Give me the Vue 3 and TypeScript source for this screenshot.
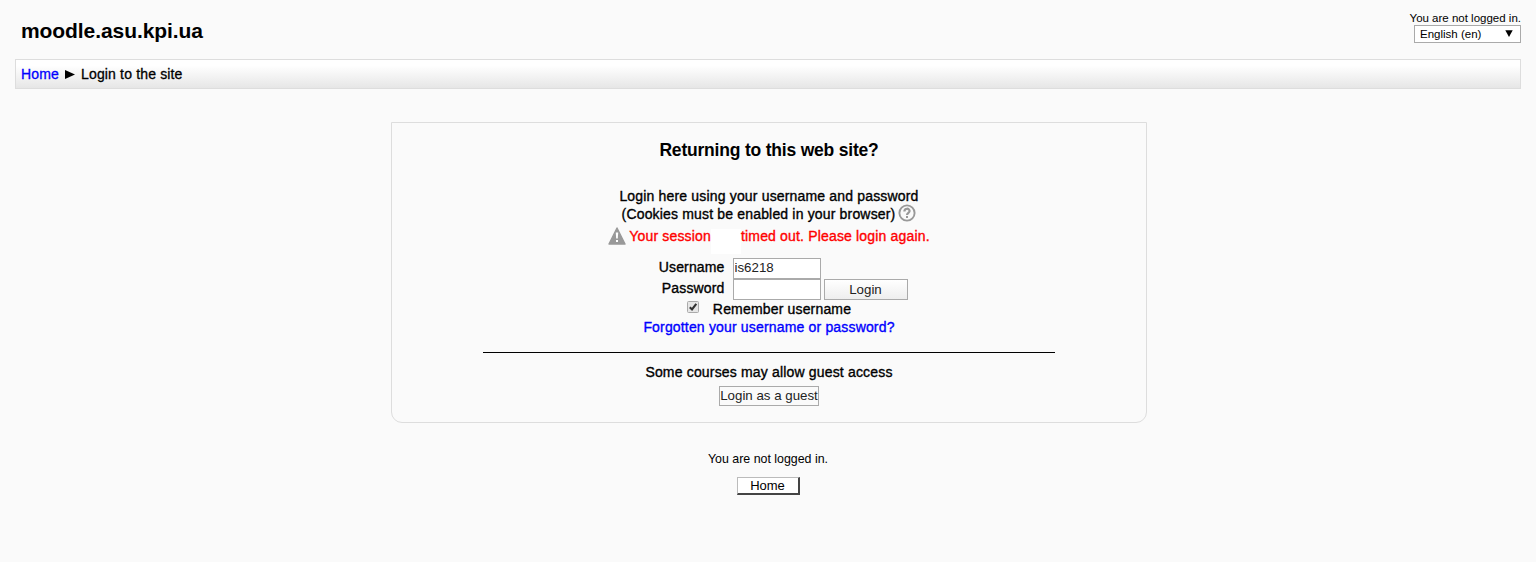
<script setup lang="ts">
import { ref } from 'vue'

const username = ref('is6218')
const password = ref('')
const remember = ref(true)
</script>

<template>
  <div class="page">
    <header class="header">
      <h1 class="site">moodle.asu.kpi.ua</h1>
      <div class="account">
        <div class="status">You are not logged in.</div>
        <div class="language"><span>English (en)</span><svg width="8" height="7" viewBox="0 0 8 7"><path d="M0.3 0.3H7.7L4 7z" /></svg></div>
      </div>
    </header>
    <nav class="crumbs">
      <a class="link">Home</a>
      <svg width="10" height="9" viewBox="0 0 10 9"><path d="M0 0L10 4.5L0 9z" /></svg>
      <span class="here">Login to the site</span>
    </nav>
    <main class="box">
      <h2 class="title">Returning to this web site?</h2>
      <div class="line intro"><span>Login here using your username and password</span></div>
      <div class="line cookies">
        <span>(Cookies must be enabled in your browser)</span>
        <svg class="help" width="18" height="18" viewBox="0 0 18 18">
          <circle cx="9" cy="9" r="7.6" fill="none" stroke="#999" stroke-width="1.9" />
          <path d="M6.4 7.4C6.4 3.9 11.6 3.9 11.6 7C11.6 8.8 9 8.8 9 10.9" fill="none" stroke="#999" stroke-width="2.2" />
          <rect x="8" y="12" width="2" height="2" fill="#999" />
        </svg>
      </div>
      <div class="line error">
        <svg width="18" height="18" viewBox="0 0 18 18">
          <path d="M9 1L17 17H1z" fill="#999" stroke="#999" stroke-width="1.4" stroke-linejoin="round" />
          <path d="M7.8 5.5H10.2L9.8 11.5H8.2z" fill="#fff" />
          <rect x="8" y="13" width="2" height="2" fill="#fff" />
        </svg>
        <span class="first">Your session</span><i class="blank"></i><span class="second">timed out. Please login again.</span>
      </div>
      <form class="form" @submit.prevent>
        <label class="label user" for="username">Username</label>
        <input id="username" v-model="username" class="field" type="text" />
        <label class="label pass" for="password">Password</label>
        <input id="password" v-model="password" class="field" type="password" />
        <button class="login" type="submit">Login</button>
      </form>
      <label class="line remember">
        <input v-model="remember" class="native" type="checkbox" />
        <svg width="12" height="12" viewBox="0 0 12 12">
          <rect x=".5" y=".5" width="11" height="11" rx="1" fill="#e6e6e6" stroke="#aaa" />
          <path v-if="remember" d="M2.8 6.2L5 8.4L9.3 2.8" fill="none" stroke="#333" stroke-width="2.1" />
        </svg>
        <span>Remember username</span>
      </label>
      <div class="line forgot"><a class="link">Forgotten your username or password?</a></div>
      <div class="rule"></div>
      <div class="line guest-text"><span>Some courses may allow guest access</span></div>
      <button class="guest" type="button">Login as a guest</button>
    </main>
    <footer class="footer">
      <div class="foot-status">You are not logged in.</div>
      <a class="home">Home</a>
    </footer>
  </div>
</template>

<style>
body { background: #fafafa; }
</style>

<style scoped>
* { box-sizing: border-box; }
.page { height: 562px; padding: 0 15px; overflow: hidden; background: #fafafa; color: #000; font-family: "Liberation Sans", Arial, sans-serif; font-size: 14px; white-space: nowrap; }
.header { height: 59px; display: flex; justify-content: space-between; }
.site { margin: 18px 0 0 6px; font-size: 21px; line-height: 25px; font-weight: 700; letter-spacing: -.08px; }
.account { display: flex; flex-direction: column; align-items: flex-end; padding-top: 12px; }
.status { font-size: 11.5px; line-height: 13px; }
.language { width: 107px; height: 18px; padding: 0 7px 1px 5px; border: 1px solid #aaa; background: #fff; display: flex; align-items: center; justify-content: space-between; font-size: 11.5px; }
.crumbs { height: 30px; padding: 0 5px; border: 1px solid #ddd; background: linear-gradient(#fff 20%, #e6e6e6); display: flex; align-items: center; font-size: 14px; letter-spacing: .16px; -webkit-text-stroke: .3px; }
.crumbs svg { margin: 1px 6px 0 6px; }
.link { color: #00f; }
.box { width: 756px; height: 301px; margin: 33px 0 0 376px; border: 1px solid #ddd; border-radius: 0 0 11px 11px; display: flex; flex-direction: column; align-items: center; }
.title { margin: 17px 0 0; font-size: 17.5px; line-height: 20px; font-weight: 700; letter-spacing: -.2px; }
.line { display: flex; align-items: center; height: 18px; font-size: 14px; line-height: 18px; letter-spacing: .17px; -webkit-text-stroke: .35px; }
.intro { margin-top: 27px; }
.cookies { height: 17px; }
.help { margin: -1px 0 0 3px; }
.error { height: 26px; color: #f00; margin-top: 1px; }
.error svg { margin: 0 3px 1px 0; }
.blank { width: 30px; height: 25px; margin-top: 10px; background: #fff; }
.form { display: grid; grid-template-columns: 74px 87px 84px; column-gap: 4px; align-items: center; height: 42px; margin: 9px 0 0 24px; grid-template-rows: 21px 21px; }
.label { font-size: 14px; text-align: right; padding-right: 4px; line-height: 18px; letter-spacing: .15px; -webkit-text-stroke: .35px; margin-top: -4px; }
.field { width: 88px; height: 21px; padding: 0 1px 2px; border: 1px solid #aaa; border-radius: 0; background: #fff; font: 13.3px "Liberation Sans", Arial, sans-serif; color: #222; outline: none; }
.user + .field { grid-column: 2 / 4; }
.login, .guest { border: 1px solid #aaa; padding: 0; background: linear-gradient(#fff, #eee); color: #222; font: 13.3px "Liberation Sans", Arial, sans-serif; }
.login { height: 21px; width: 84px; }
.guest { width: 100px; height: 20px; margin-top: 5px; padding-bottom: 1px; background: #fafafa; }
.remember { height: 18px; }
.remember svg { margin: -4px 14px 0 0; }
.native { position: absolute; opacity: 0; }
.rule { width: 572px; height: 1px; background: #000; margin-top: 16px; }
.guest-text { margin-top: 10px; }
.footer { display: flex; flex-direction: column; align-items: center; padding-top: 28px; font-size: 12.4px; }
.foot-status { line-height: 16px; }
.home { width: 63px; height: 18px; margin-top: 10px; border: 1px solid #bbb; border-right: 2px solid #444; border-bottom: 2px solid #444; background: #fff; text-align: center; line-height: 16px; font-size: 13px; }
</style>
